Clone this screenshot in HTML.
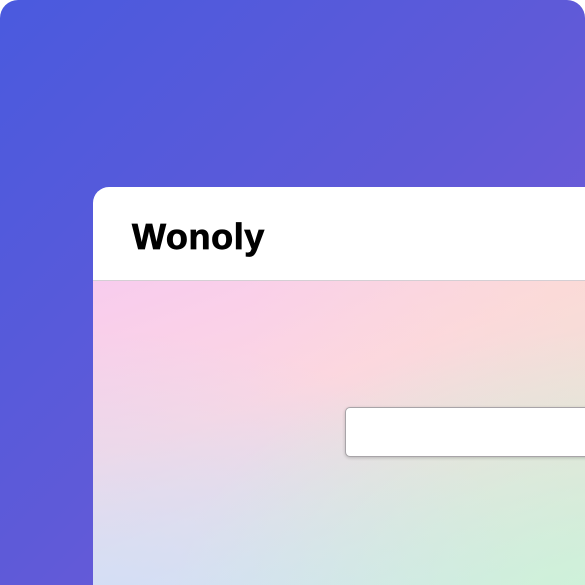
<!DOCTYPE html>
<html><head><style>
html,body{margin:0;padding:0;width:585px;height:585px;overflow:hidden;background:#fff}
.bg{position:absolute;left:0;top:0;width:585px;height:585px;border-radius:18px 18px 0 0;background:linear-gradient(135deg,#4a5ade 0%,#5f5ad8 50%,#7a5cd9 100%);overflow:hidden}
.card{position:absolute;left:93px;top:187px;width:520px;height:420px;border-radius:16px;background:#fff;overflow:hidden}
.hdr{height:93px;border-bottom:1px solid #d4cfd4;position:relative}
.hdr span{position:absolute;left:39px;top:29px;font:bold 36px "Liberation Sans",sans-serif;letter-spacing:0.6px;color:#000;-webkit-text-stroke:0.8px #000}
.body{position:absolute;left:0;top:94px;right:0;bottom:0;background:
linear-gradient(to bottom,rgba(255,255,255,0) 40%,rgba(255,255,255,0) 100%),
linear-gradient(160deg,#f8ccee 0%,#fcd6e2 35%,#e8dfe6 60%,#cfe6f0 85%,#c6f2ec 100%)}
.body:before{content:"";position:absolute;inset:0;background:linear-gradient(to right,rgba(255,255,255,0) 30%,rgba(250,225,200,0.45) 100%)}
.body:after{content:"";position:absolute;inset:0;background:radial-gradient(ellipse at 100% 100%,rgba(200,245,215,0.8) 0%,rgba(200,245,215,0) 60%),radial-gradient(ellipse at 0% 100%,rgba(205,222,250,0.8) 0%,rgba(205,222,250,0) 60%)}
.inp{position:absolute;left:252px;top:126px;width:300px;height:48px;background:#fff;border:1px solid #a8a4a8;border-radius:5px;box-shadow:0 1px 3px rgba(0,0,0,.2);z-index:1}
</style></head><body>
<div class="bg">
<div class="card">
<div class="hdr"><span>Wonoly</span></div>
<div class="body"><div class="inp"></div></div>
</div>
</div>
</body></html>
